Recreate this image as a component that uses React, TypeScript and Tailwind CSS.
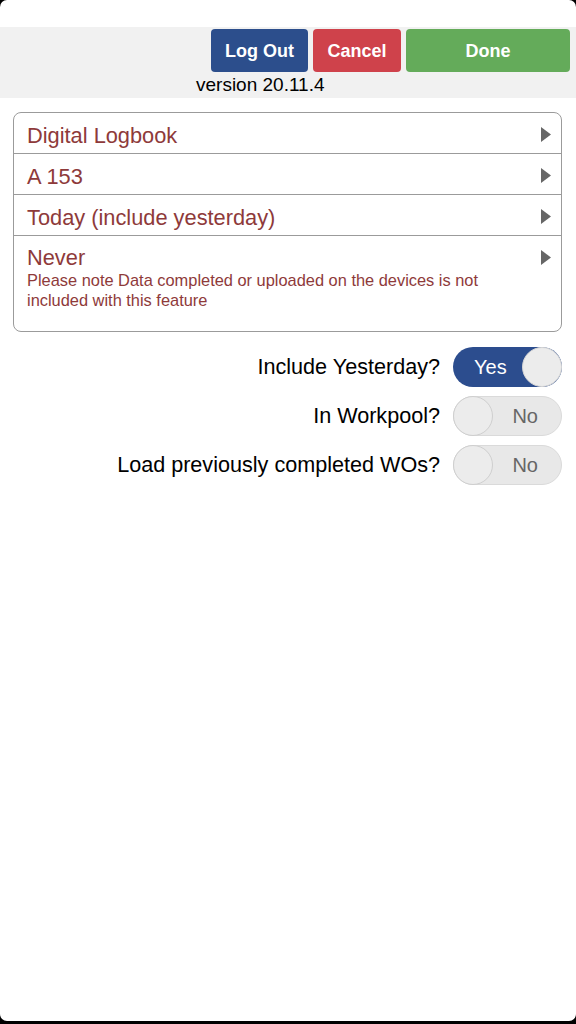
import React from "react";

const Tri = () => (
  <svg width="10" height="15" viewBox="0 0 10 15" className="shrink-0">
    <polygon points="0,0 10,7.5 0,15" fill="#666666" />
  </svg>
);

const Row = ({ title, sub, last }: { title: string; sub?: string; last?: boolean }) =>
  sub ? (
    <div className={`flex items-start justify-between pl-[13px] pr-[10px] h-[95px] pt-[10px] ${last ? "" : "border-b border-[#9b9b9b]"}`}>
      <div className="flex flex-col">
        <span className="text-[21.8px] leading-[24px] text-[#8e3a3a]">{title}</span>
        <span className="text-[16.4px] leading-[20px] text-[#8e3a3a] w-[500px]">{sub}</span>
      </div>
      <div className="mt-[4px]">
        <Tri />
      </div>
    </div>
  ) : (
    <div className={`flex items-center justify-between pl-[13px] pr-[10px] h-[41px] pt-[5px] ${last ? "" : "border-b border-[#9b9b9b]"}`}>
      <span className="text-[21.8px] leading-[26px] text-[#8e3a3a]">{title}</span>
      <div className="-mt-[3px]">
        <Tri />
      </div>
    </div>
  );

const Toggle = ({ on }: { on: boolean }) =>
  on ? (
    <div className="w-[109px] h-[40px] rounded-full bg-[#2c4d8e] flex items-center justify-between pl-[21px] pr-0">
      <span className="text-white text-[20px]">Yes</span>
      <div className="w-[40px] h-[40px] rounded-full bg-[#ececec] border border-[#d5d5d5]" />
    </div>
  ) : (
    <div className="w-[109px] h-[40px] rounded-full bg-[#e8e8e8] border border-[#dadada] flex items-center justify-between pr-[23px]">
      <div className="w-[40px] h-[40px] -ml-px rounded-full bg-[#ececec] border border-[#cfcfcf]" />
      <span className="text-[#666666] text-[20px]">No</span>
    </div>
  );

const ToggleRow = ({ label, on }: { label: string; on: boolean }) => (
  <div className="flex items-center justify-end gap-[13px] h-[40px]">
    <span className="text-[21.6px] text-black">{label}</span>
    <Toggle on={on} />
  </div>
);

export default function App() {
  return (
    <div className="bg-black h-[1024px] w-[576px]" style={{ fontFamily: '"Liberation Sans", Arial, sans-serif' }}>
      <div className="bg-white h-[1021px] rounded-[7px] overflow-hidden">
        <div className="h-[27px]" />
        <div className="bg-[#f1f1f1] h-[71px] pt-[2px]">
          <div className="flex justify-end gap-[5px] pr-[6px]">
            <div className="w-[97px] h-[43px] pt-[2px] rounded-[4px] bg-[#2c4e8c] text-white font-bold text-[18px] flex items-center justify-center">Log Out</div>
            <div className="w-[88px] h-[43px] pt-[2px] rounded-[4px] bg-[#cf424b] text-white font-bold text-[18px] flex items-center justify-center">Cancel</div>
            <div className="w-[164px] h-[43px] pt-[2px] rounded-[4px] bg-[#64ab5a] text-white font-bold text-[18px] flex items-center justify-center">Done</div>
          </div>
          <div className="pl-[196px] text-[19px] leading-[22px] text-black mt-[2px]">version 20.11.4</div>
        </div>
        <div className="px-[13px] pt-[14px]">
          <div className="w-[549px] border border-[#9b9b9b] rounded-[8px] bg-white">
            <Row title="Digital Logbook" />
            <Row title="A 153" />
            <Row title="Today (include yesterday)" />
            <Row title="Never" sub="Please note Data completed or uploaded on the devices is not included with this feature" last />
          </div>
        </div>
        <div className="flex flex-col gap-[9px] pr-[14px] pt-[15px]">
          <ToggleRow label="Include Yesterday?" on={true} />
          <ToggleRow label="In Workpool?" on={false} />
          <ToggleRow label="Load previously completed WOs?" on={false} />
        </div>
      </div>
    </div>
  );
}
